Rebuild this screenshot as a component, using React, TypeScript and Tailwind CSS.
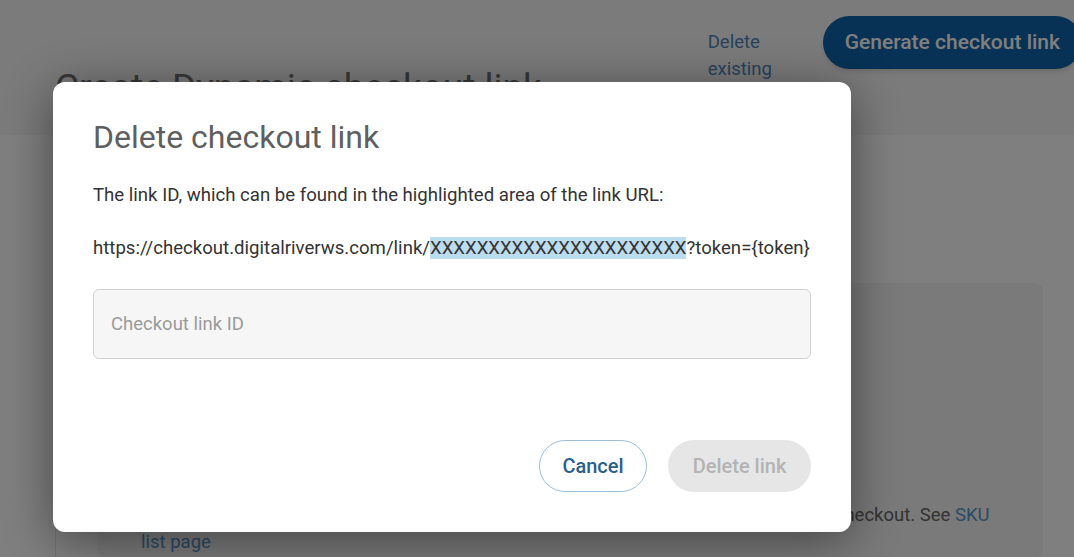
import React from "react";

export default function App() {
  return (
    <div
      className="relative w-full h-[557px] overflow-hidden bg-white"
      style={{ fontFamily: "Roboto, 'Liberation Sans', sans-serif" }}
    >
      {/* Background page */}
      <div className="flex flex-col h-full">
        <header className="flex items-start h-[135px] bg-[#f7f7f7] shrink-0 mr-[-8px]">
          <div className="flex-1 min-w-0 pl-[55px] pt-[66px]">
            <h1 className="text-[37px] leading-[44px] text-[#707070] whitespace-nowrap">
              Create Dynamic checkout link
            </h1>
          </div>
          <a className="mt-[29px] w-[86px] text-[18.5px] leading-[27px] text-[#4f86b8] shrink-0">
            Delete existing checkout link
          </a>
          <button className="ml-[29px] mt-[16px] h-[53px] shrink-0 rounded-full bg-[#0e64ab] px-[22px] text-[21px] font-medium text-white shadow-md whitespace-nowrap">
            Generate checkout link
          </button>
        </header>
        <main className="flex-1 flex ml-[55px] border-l border-[#e6e6e6] pl-[41px] pr-[31px] pt-[148px]">
          <section className="flex-1 rounded-lg bg-[#f4f4f4] px-[44px] pt-[24px]">
            <h2 className="text-[22px] text-[#555]">Products</h2>
            <p className="mt-[162px] text-[18.5px] leading-[27px] text-[#666] whitespace-nowrap">
              Select the products, SKUs and quantities that you want your customers to add to the checkout. See{" "}
              <a className="text-[#5894cc]">SKU</a>
              <br />
              <a className="text-[#5894cc]">list page</a>
            </p>
          </section>
        </main>
      </div>

      {/* Overlay */}
      <div className="absolute inset-0 bg-black/50" />

      {/* Modal */}
      <div className="absolute left-[53px] top-[82px] w-[798px] h-[450px] rounded-[12px] bg-white shadow-[0_8px_48px_rgba(0,0,0,0.45)] px-[40px] pt-[35px] flex flex-col">
        <h2 className="text-[32px] leading-[40px] text-[#5f5f5f]">Delete checkout link</h2>
        <p className="mt-[26px] text-[18.6px] leading-[24px] text-[#333]">
          The link ID, which can be found in the highlighted area of the link URL:
        </p>
        <p className="mt-[29px] text-[18.6px] leading-[24px] text-[#333] whitespace-nowrap">
          https://checkout.digitalriverws.com/link/
          <span className="bg-[#bcdcef]">XXXXXXXXXXXXXXXXXXXXXX</span>
          ?token={"{token}"}
        </p>
        <input
          className="mt-[29px] h-[70px] w-full shrink-0 rounded-[6px] border border-[#d0d0d0] bg-[#f6f6f6] px-[17px] text-[18.5px] text-[#333] placeholder:text-[#9a9a9a] outline-none"
          placeholder="Checkout link ID"
        />
        <div className="mt-[81px] flex justify-end gap-[21px]">
          <button className="h-[52px] w-[108px] rounded-full border border-[#9dbfd9] bg-white text-[20px] font-medium text-[#2a5f8e]">
            Cancel
          </button>
          <button className="h-[52px] w-[143px] rounded-full bg-[#e6e6e6] text-[20px] font-medium text-[#b3b3b3]">
            Delete link
          </button>
        </div>
      </div>
    </div>
  );
}
